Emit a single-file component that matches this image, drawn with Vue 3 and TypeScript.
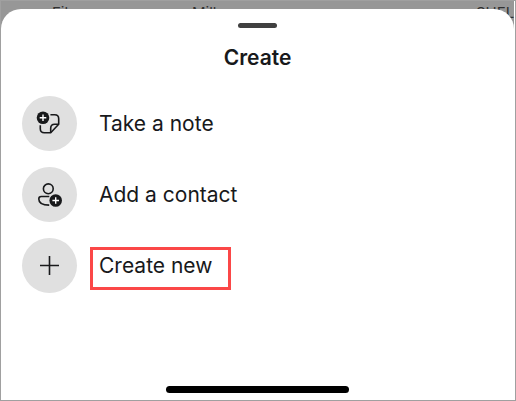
<script setup lang="ts">
type IconName = 'note' | 'contact' | 'plus'

interface Action {
  label: string
  icon: IconName
  highlighted?: boolean
}

const actions: Action[] = [
  { label: 'Take a note', icon: 'note' },
  { label: 'Add a contact', icon: 'contact' },
  { label: 'Create new', icon: 'plus', highlighted: true },
]
</script>

<template>
  <div class="screen">
    <div class="backdrop" aria-hidden="true">
      <span>File</span>
      <span>Mill</span>
      <span>SHEL</span>
    </div>
    <main class="sheet">
      <div class="grabber"></div>
      <h1 class="title">Create</h1>
      <ul class="actions">
        <li v-for="action in actions" :key="action.icon">
          <button type="button" class="action">
            <span class="disc">
              <svg v-if="action.icon === 'note'" class="icon" viewBox="0 0 27 27" aria-hidden="true">
                <path class="line" d="M14.4 4.7H18.7Q22.7 4.7 22.7 8.7V14.3L14.7 22.7H8.3Q4.3 22.7 4.3 18.7V15.2" />
                <path class="line" d="M14.7 22.5V18.3Q14.7 14.3 18.7 14.3H22.5" />
                <circle cx="7" cy="7.7" r="6.3" />
                <path class="cross" d="M7 4.4V11M3.7 7.7H10.3" />
              </svg>
              <svg v-else-if="action.icon === 'contact'" class="icon" viewBox="0 0 27 27" aria-hidden="true">
                <circle class="line" cx="12.3" cy="7.8" r="4.9" />
                <path class="line" d="M13.3 15.5H5.2Q2.8 15.5 2.8 17.9C2.8 22 7 24.1 13.2 24.1" />
                <circle cx="19.7" cy="19.5" r="6.3" />
                <path class="cross" d="M19.7 16.2V22.8M16.4 19.5H23" />
              </svg>
              <svg v-else class="icon" viewBox="0 0 27 27" aria-hidden="true">
                <path class="line" d="M13.5 4V23M4 13.5H23" />
              </svg>
            </span>
            <span class="label" :class="{ highlighted: action.highlighted }">{{ action.label }}</span>
          </button>
        </li>
      </ul>
      <div class="home-bar"></div>
    </main>
  </div>
</template>

<style>
body {
  margin: 0;
}
</style>

<style scoped>
.screen {
  box-sizing: border-box;
  display: flex;
  flex-direction: column;
  min-height: 100vh;
  padding-right: 1px;
  border: 1px solid #a0a0a0;
  background: #fff;
  color: #18191b;
  font-family: Inter, "Liberation Sans", sans-serif;
}

.backdrop {
  display: grid;
  grid-template-columns: 140px 1fr 38px;
  height: 28px;
  margin-bottom: -20px;
  padding: 2px 0 0 51px;
  box-sizing: border-box;
  overflow: hidden;
  background: #979797;
  color: #303030;
  font-size: 15px;
  line-height: 20px;
}

.sheet {
  position: relative;
  display: flex;
  flex: 1;
  flex-direction: column;
  align-items: center;
  padding: 14px 20px 7px;
  border-radius: 20px 20px 0 0;
  background: #fff;
}

.grabber {
  width: 39px;
  height: 5px;
  border-radius: 3px;
  background: #404040;
}

.title {
  margin: 16px 0 24px;
  font-size: 21px;
  font-weight: 600;
  line-height: 28px;
}

.actions {
  display: flex;
  flex-direction: column;
  align-self: stretch;
  gap: 16px;
  margin: 0;
  padding: 0;
  list-style: none;
}

.action {
  display: flex;
  align-items: center;
  gap: 22px;
  width: 100%;
  padding: 0 1px;
  border: 0;
  background: none;
  color: inherit;
  font: inherit;
  font-size: 21px;
  line-height: 28px;
  text-align: left;
  cursor: pointer;
}

.disc {
  display: grid;
  flex: none;
  place-items: center;
  width: 55px;
  height: 55px;
  border-radius: 50%;
  background: #e0e0e0;
}

.icon {
  width: 27px;
  height: 27px;
  fill: #18191b;
}

.line {
  fill: none;
  stroke: #18191b;
  stroke-width: 1.6;
  stroke-linejoin: round;
}

.cross {
  fill: none;
  stroke: #fff;
  stroke-width: 1.4;
}

.label {
  position: relative;
}

.highlighted::after {
  position: absolute;
  inset: -5px -19px -10px -9px;
  border: 3px solid #fb4747;
  content: "";
}

.home-bar {
  width: 183px;
  height: 7px;
  margin-top: auto;
  border-radius: 4px;
  background: #000;
}
</style>
